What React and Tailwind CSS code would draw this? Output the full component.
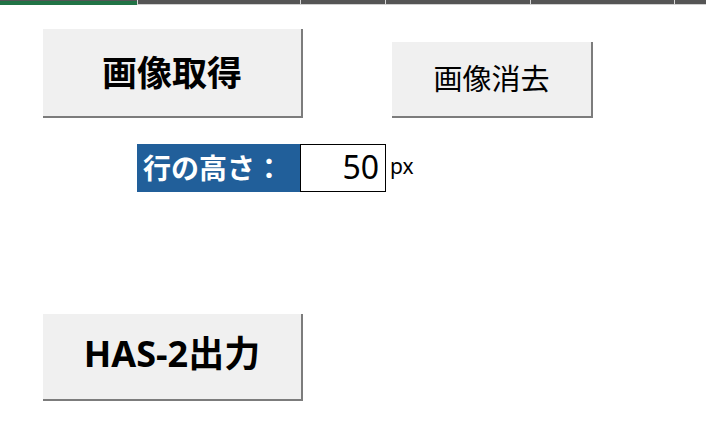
import React from "react";

const jp = { fontFamily: '"Noto Sans CJK JP", "Noto Sans", sans-serif' };
const latinJp = { fontFamily: '"Noto Sans", "Noto Sans CJK JP", sans-serif' };

function Header() {
  const segs = [137, 163, 85, 145, 144, 32];
  return (
    <div className="flex h-[5px] w-full">
      {segs.map((w, i) => (
        <div
          key={i}
          className={
            i === 0
              ? "h-full shrink-0 border-t border-[#555555] bg-[#217346]"
              : "h-full shrink-0 border-l border-[#d8d8d8] border-b border-b-[#d0d0d0] bg-[#555555]"
          }
          style={{ width: w, flexGrow: i === segs.length - 1 ? 1 : 0 }}
        />
      ))}
    </div>
  );
}

export default function App() {
  return (
    <div className="w-[706px] h-[442px] bg-white overflow-hidden" style={jp}>
      <Header />
      <div className="flex items-end pl-[43px] pt-[24px]">
        <div className="flex h-[89px] w-[260px] items-center justify-center border-r-2 border-b-2 border-[#7c7c7c] bg-[#f0f0f0] pb-[5px] text-[35px] font-bold leading-none text-black">
          画像取得
        </div>
        <div className="ml-[89px] flex h-[76px] w-[201px] items-center justify-center border-r-2 border-b-2 border-[#7c7c7c] bg-[#f0f0f0] pb-[4px] text-[29px] leading-none text-black">
          画像消去
        </div>
      </div>
      <div className="mt-[26px] flex items-center pl-[137px]">
        <div className="flex h-[48px] w-[163px] items-center bg-[#215f9a] pl-[6px] pb-[2px] text-[28px] font-bold leading-none text-white">
          行の高さ：
        </div>
        <div
          className="flex h-[48px] w-[86px] items-center justify-end border border-black bg-white pr-[6px] pb-[2px] text-[32px] leading-none text-black"
          style={{ fontFamily: '"Noto Sans", "Open Sans", sans-serif' }}
        >
          50
        </div>
        <div
          className="ml-[4px] pb-[4px] text-[21px] leading-none text-black"
          style={{ fontFamily: '"Noto Sans", "Open Sans", sans-serif' }}
        >
          px
        </div>
      </div>
      <div className="mt-[122px] pl-[43px]">
        <div
          className="flex h-[87px] w-[260px] items-center justify-center border-r-2 border-b-2 border-[#7c7c7c] bg-[#f0f0f0] pb-[5px] text-[36px] font-bold leading-none text-black"
          style={latinJp}
        >
          HAS-2出力
        </div>
      </div>
    </div>
  );
}
